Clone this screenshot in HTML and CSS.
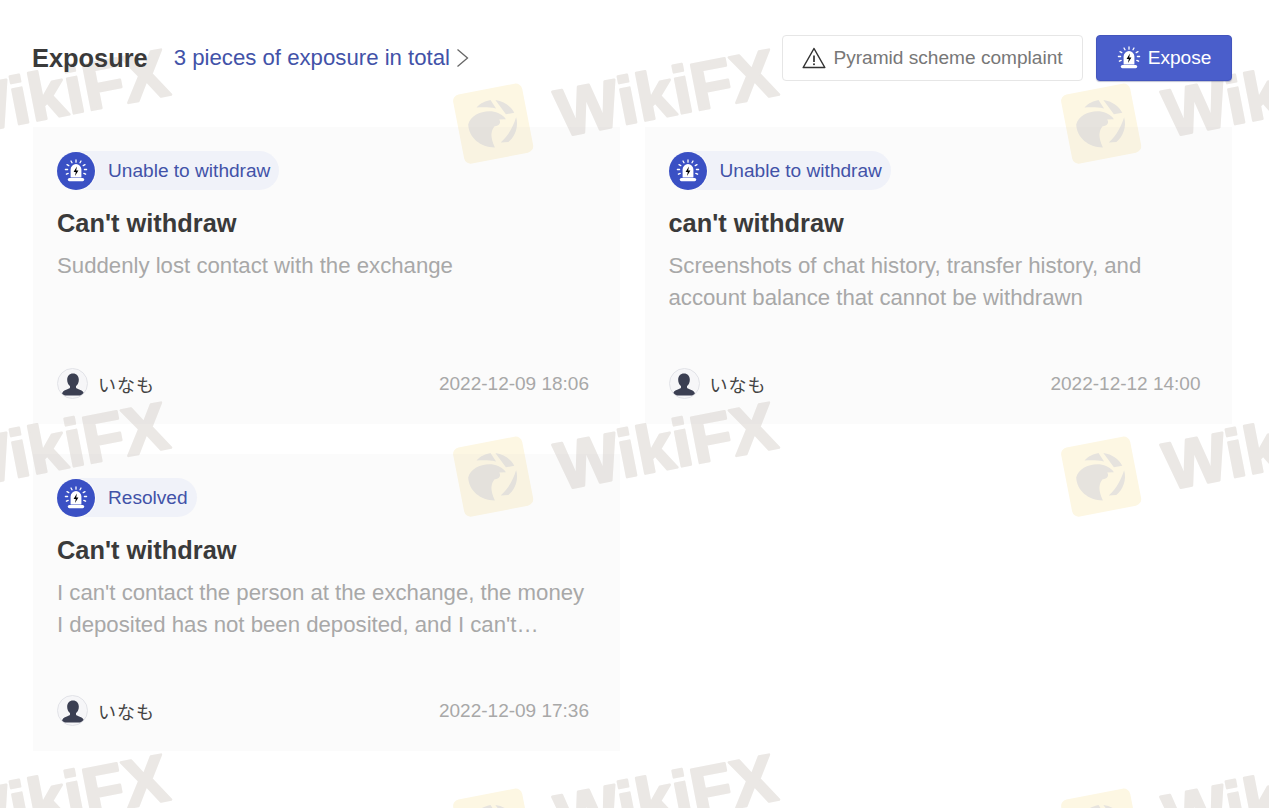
FILE: index.html
```html
<!DOCTYPE html>
<html lang="en">
<head>
    <meta charset="UTF-8">
    <meta name="viewport" content="width=device-width, initial-scale=1.0">
    <title>Exposure</title>
    <link rel="stylesheet" href="styles.css">
</head>
<body>
    <svg class="defs" aria-hidden="true">
        <symbol id="siren" viewBox="0 0 24 24">
            <path d="M6.600 18.500V10.500a5.400 5.400 0 0 1 10.800 0V18.500z" fill="#fff"/>
            <rect x="3.800" y="18.900" width="16.400" height="3.300" rx="1.600" fill="#fff"/>
            <path d="M12.900 7.400 9.600 12.900h2.200l-.8 4 3.400-5.500h-2.200z" class="bolt"/>
            <path d="M12 1v2.200M7 2l1 1.800M17 2l-1 1.800M3 5.600l1.800 1M21 5.600l-1.800 1M1.400 10.500h2.200M20.400 10.500h2.200M2.400 15.200l1.800-.8M21.600 15.200l-1.800-.8" stroke="#fff" stroke-width="1.300" stroke-linecap="round" fill="none"/>
        </symbol>
        <symbol id="person" viewBox="3 3 24 24">
            <path d="M15 6c-3.100 0-5 2.300-5 5.400 0 2.300 1 4.300 2.400 5.400v1.500c-.2 1-4.900 1.600-6.300 3.700-.5.800-.6 1.800-.6 2.800h19c0-1-.1-2-.6-2.800-1.400-2.100-6.100-2.700-6.300-3.700v-1.500c1.400-1.100 2.400-3.100 2.400-5.400C20 8.300 18.100 6 15 6z" fill="#3b3f52"/>
        </symbol>
        <symbol id="eagle" viewBox="0 0 80 80">
            <rect x="3" y="3" width="74" height="74" rx="7" fill="#fdf7e3"/>
            <path d="M14 36C18 27 30 24 41 27 47 29 52 33 54 38L47 37C49 41 45 44 41 43 36 47 34 53 37 65 22 62 12 50 14 36z" fill="#e6e3de"/>
            <path d="M26 20C31 16 37 15 42 15L46 25C39 22 32 21 26 20zM47 16C56 19 62 26 64 33L55 33zM65 38C66 48 60 58 52 62L44 61C54 55 60 47 65 38z" fill="#e6e3de"/>
        </symbol>
    </svg>

    <div class="watermarks" aria-hidden="true">
        <div class="wm"><svg class="wm-logo"><use href="#eagle"/></svg><svg class="wm-word"><text x="3" y="62">WikiFX</text></svg></div>
        <div class="wm"><svg class="wm-logo"><use href="#eagle"/></svg><svg class="wm-word"><text x="3" y="62">WikiFX</text></svg></div>
        <div class="wm"><svg class="wm-logo"><use href="#eagle"/></svg><svg class="wm-word"><text x="3" y="62">WikiFX</text></svg></div>
        <div class="wm"><svg class="wm-logo"><use href="#eagle"/></svg><svg class="wm-word"><text x="3" y="62">WikiFX</text></svg></div>
        <div class="wm"><svg class="wm-logo"><use href="#eagle"/></svg><svg class="wm-word"><text x="3" y="62">WikiFX</text></svg></div>
        <div class="wm"><svg class="wm-logo"><use href="#eagle"/></svg><svg class="wm-word"><text x="3" y="62">WikiFX</text></svg></div>
        <div class="wm"><svg class="wm-logo"><use href="#eagle"/></svg><svg class="wm-word"><text x="3" y="62">WikiFX</text></svg></div>
        <div class="wm"><svg class="wm-logo"><use href="#eagle"/></svg><svg class="wm-word"><text x="3" y="62">WikiFX</text></svg></div>
        <div class="wm"><svg class="wm-logo"><use href="#eagle"/></svg><svg class="wm-word"><text x="3" y="62">WikiFX</text></svg></div>
    </div>

    <main class="page">
        <header class="top">
            <h1 class="top-title">Exposure</h1>
            <a class="top-link" href="#">3 pieces of exposure in total
                <svg class="chevron" viewBox="0 0 13 20"><path d="M1.500 1.500 11.500 10l-10 8.500" fill="none" stroke="#666" stroke-width="1.300"/></svg>
            </a>
            <div class="top-actions">
                <button class="btn btn-plain" type="button">
                    <svg class="btn-icon" viewBox="0 0 24 24"><path d="M12 2.500 1.200 21.500h21.600z" fill="none" stroke="#333" stroke-width="1.500" stroke-linejoin="round"/><path d="M12 9.500v6.500" stroke="#333" stroke-width="1.700"/><circle cx="12" cy="18.300" r="1" fill="#333"/></svg>
                    Pyramid scheme complaint
                </button>
                <button class="btn btn-primary" type="button">
                    <svg class="btn-icon"><use href="#siren"/></svg>
                    Expose
                </button>
            </div>
        </header>

        <section class="cards">
            <article class="card">
                <div class="tag"><span class="tag-icon"><svg><use href="#siren"/></svg></span><span class="tag-text">Unable to withdraw</span></div>
                <h2 class="card-title">Can't withdraw</h2>
                <p class="card-desc">Suddenly lost contact with the exchange</p>
                <div class="card-foot">
                    <span class="avatar"><svg><use href="#person"/></svg></span>
                    <span class="user">いなも</span>
                    <span class="date">2022-12-09 18:06</span>
                </div>
            </article>
            <article class="card">
                <div class="tag"><span class="tag-icon"><svg><use href="#siren"/></svg></span><span class="tag-text">Unable to withdraw</span></div>
                <h2 class="card-title">can't withdraw</h2>
                <p class="card-desc">Screenshots of chat history, transfer history, and account balance that cannot be withdrawn</p>
                <div class="card-foot">
                    <span class="avatar"><svg><use href="#person"/></svg></span>
                    <span class="user">いなも</span>
                    <span class="date">2022-12-12 14:00</span>
                </div>
            </article>
            <article class="card">
                <div class="tag"><span class="tag-icon"><svg><use href="#siren"/></svg></span><span class="tag-text">Resolved</span></div>
                <h2 class="card-title">Can't withdraw</h2>
                <p class="card-desc">I can't contact the person at the exchange, the money I deposited has not been deposited, and I can't withdraw it at all</p>
                <div class="card-foot">
                    <span class="avatar"><svg><use href="#person"/></svg></span>
                    <span class="user">いなも</span>
                    <span class="date">2022-12-09 17:36</span>
                </div>
            </article>
        </section>
    </main>
</body>
</html>
```

FILE: styles.css
```css
html, body { margin: 0; height: 808px; overflow: hidden; background: #fff; }
body { font-family: "Liberation Sans", Arial, sans-serif; color: #3a3a3a; position: relative; }
h1, h2, p { margin: 0; }
.defs { display: none; }

/* watermark tiles lie behind everything */
.watermarks { position: absolute; top: 0; left: -155px; width: 1424px; height: 808px; overflow: hidden; display: grid; grid-template-columns: repeat(3, 608px); grid-auto-rows: 352.500px; }
.wm { display: flex; align-items: center; gap: 23px; height: 90px; margin-top: 47px; transform: rotate(-11deg); transform-origin: 250px 45px; }
.wm-logo { width: 76px; height: 76px; flex: none; margin-bottom: 18px; }
.wm-word { width: 250px; height: 90px; flex: none; }
.wm-word text { font-size: 67px; font-weight: bold; fill: #ebe8e5; stroke: #ebe8e5; stroke-width: 2.500; stroke-linejoin: round; }

.page { position: relative; padding: 35px 37px 0 32px; }

.top { display: flex; align-items: center; height: 46px; }
.top-title { font-size: 25.400px; font-weight: bold; color: #3a3a3a; }
.top-link { margin-left: 26px; font-size: 22.200px; color: #4252a8; text-decoration: none; display: flex; align-items: center; gap: 6px; }
.chevron { width: 13px; height: 20px; }
.top-actions { margin-left: auto; display: flex; gap: 13px; }
.btn { height: 46px; display: flex; align-items: center; gap: 7px; font: 19.100px "Liberation Sans", Arial, sans-serif; border-radius: 4px; padding: 0; box-sizing: border-box; justify-content: center; }
.btn-icon { width: 24px; height: 24px; }
.btn-plain { width: 301px; background: #fff; border: 1px solid #e6e6e6; color: #777; }
.btn-primary { width: 136px; background: #4a5ecb; border: 1px solid #4355bd; color: #fff; box-shadow: 0 1px 1px rgba(40, 50, 110, .3); }
.btn-primary .bolt { fill: #4a5ecb; }

.cards { display: grid; grid-template-columns: 587px 587px; grid-auto-rows: 297px; column-gap: 24.500px; row-gap: 30px; margin-top: 46px; margin-left: 1px; }
.card { background: rgba(200, 200, 200, .08); padding: 24px 31px 25px 24px; display: flex; flex-direction: column; }

.tag { display: inline-flex; align-items: center; align-self: flex-start; height: 39px; background: #f0f2f9; border-radius: 20px; padding-right: 9px; }
.tag-icon { width: 38px; height: 38px; border-radius: 50%; background: #3a50c4; display: flex; align-items: center; justify-content: center; box-shadow: 0 0 0 1px #fafafb; }
.tag-icon svg { width: 24px; height: 24px; }
.tag-icon .bolt { fill: #3a50c4; }
.tag-text { margin-left: 13px; font-size: 19.100px; color: #4252a8; }

.card-title { margin-top: 18px; font-size: 25.400px; line-height: 30px; font-weight: bold; color: #3a3a3a; }
.card-desc { margin-top: 12px; font-size: 22.200px; line-height: 32px; color: #a8a8a8; display: -webkit-box; -webkit-box-orient: vertical; -webkit-line-clamp: 2; overflow: hidden; }

.card-foot { margin-top: auto; display: flex; align-items: center; }
.avatar { width: 31px; height: 31px; border: 1px solid #e2e3e8; border-radius: 50%; box-sizing: border-box; background: #f6f6f8; display: flex; align-items: center; justify-content: center; overflow: hidden; }
.avatar svg { width: 28px; height: 28px; }
.user { margin-left: 10px; font: 18px "Noto Sans CJK JP", sans-serif; letter-spacing: 1px; color: #444; }
.date { margin-left: auto; font-size: 19px; color: #a8a8a8; }
```
